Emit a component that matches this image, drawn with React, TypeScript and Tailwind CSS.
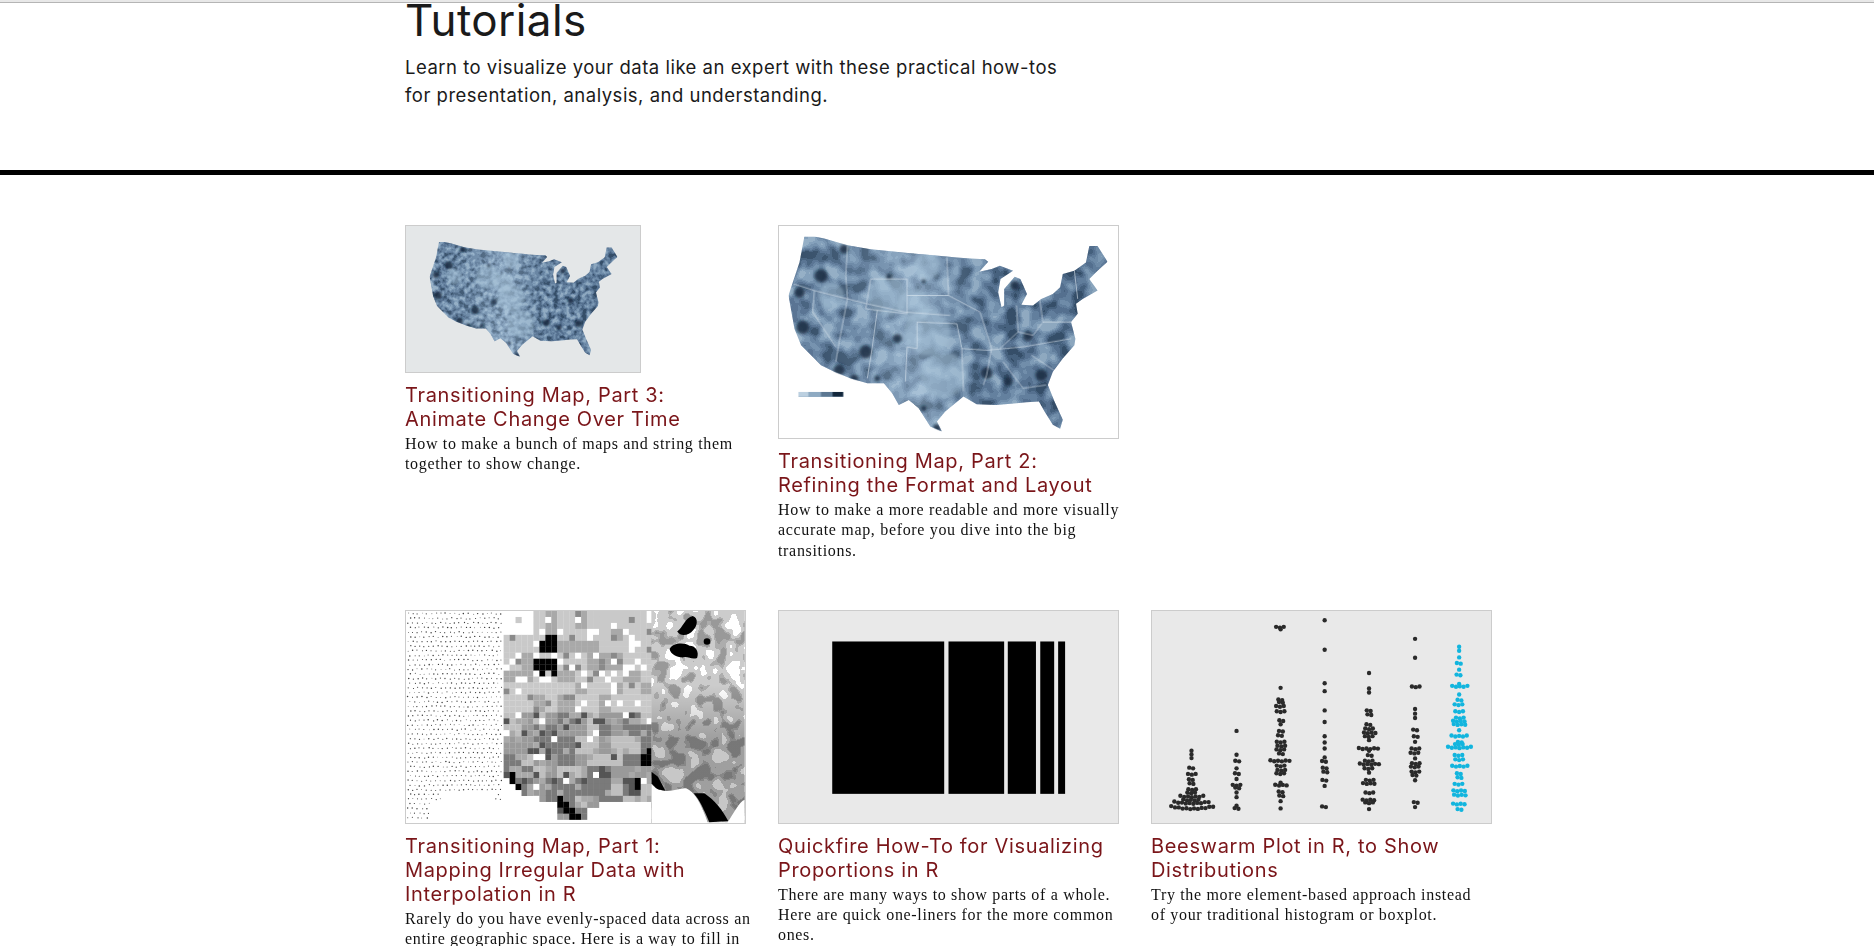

import React from "react";

const outline =
  "100,62 130,62 160,68 230,88 300,100 420,112 530,122 560,125 600,128 645,130 655,138 628,168 665,160 690,150 730,165 692,190 685,230 695,275 703,270 703,220 735,183 752,190 772,235 755,268 790,270 815,250 850,235 872,215 880,175 915,165 950,140 960,90 985,90 1015,138 985,165 960,190 985,225 940,250 920,265 925,295 905,320 918,370 915,390 880,430 850,470 835,510 855,560 880,615 872,642 850,630 825,590 808,560 770,562 740,565 680,570 620,568 580,545 525,590 500,620 515,650 480,635 445,580 415,555 385,570 365,535 340,505 290,505 240,490 190,470 150,450 90,390 70,340 52,240 65,200 85,140";

const stateLines = [
  "68,205 130,225 230,250 290,265 405,290 540,300",
  "230,90 225,180 230,250 205,380 195,440",
  "300,190 285,280 410,295 410,190 300,190",
  "130,225 125,290 195,395",
  "320,285 305,395 290,490",
  "410,395 440,400 440,320 560,325 575,400 650,405 760,395 905,370",
  "410,395 405,500",
  "530,125 535,240 630,290 665,400 650,480 640,510",
  "410,240 535,240",
  "740,270 745,350 690,400",
  "810,250 820,320 790,360 745,350",
  "700,440 760,520 830,510",
  "785,420 860,470",
  "915,165 925,250",
  "820,320 905,320",
  "575,400 580,530",
];

function UsMap({ id, seed, freq, light }: { id: string; seed: number; freq: number; light: boolean }) {
  const darks: [number, number, number][] = [
    [285, 410, 20], [205, 465, 17], [460, 197, 7], [355, 183, 9], [775, 362, 15], [650, 475, 18], [715, 500, 14],
    [500, 640, 12], [85, 230, 16], [95, 335, 20], [380, 370, 14], [150, 180, 20], [735, 210, 14], [250, 490, 12],
    [320, 490, 9], [220, 100, 14], [460, 580, 8], [815, 480, 18],
  ];
  const lights: [number, number, number][] = [
    [470, 350, 70], [350, 240, 60], [470, 150, 40], [520, 480, 70], [430, 270, 50], [180, 240, 40],
  ];
  return (
    <g clipPath={`url(#${id}-clip)`}>
      <defs>
        <clipPath id={`${id}-clip`}>
          <polygon points={outline} />
        </clipPath>
        <filter id={`${id}-n`} x="0" y="0" width="100%" height="100%" colorInterpolationFilters="sRGB">
          <feTurbulence type="fractalNoise" baseFrequency={freq} numOctaves={2} seed={seed} />
          <feColorMatrix type="matrix" values="2 0 0 0 -0.5 2 0 0 0 -0.5 2 0 0 0 -0.5 0 0 0 0 1" />
          <feComponentTransfer>
            <feFuncR type="discrete" tableValues=".66 .58 .51 .44 .38 .3 .22" />
            <feFuncG type="discrete" tableValues=".76 .69 .62 .55 .48 .4 .31" />
            <feFuncB type="discrete" tableValues=".84 .79 .73 .67 .6 .51 .41" />
          </feComponentTransfer>
        </filter>
        <filter id={`${id}-b`} x="-50%" y="-50%" width="200%" height="200%">
          <feGaussianBlur stdDeviation="5" />
        </filter>
        <linearGradient id={`${id}-g`} x1="0" x2="1" y1="0" y2="0">
          <stop offset="0" stopColor="#2a4a6a" stopOpacity="0.12" />
          <stop offset="0.42" stopColor="#a9c3d9" stopOpacity="0.45" />
          <stop offset="0.65" stopColor="#2a4a6a" stopOpacity="0.18" />
          <stop offset="1" stopColor="#2a4a6a" stopOpacity="0.25" />
        </linearGradient>
      </defs>
      <rect x="25" y="30" width="1020" height="640" fill="#7f9fbc" filter={`url(#${id}-n)`} />
      <rect x="25" y="30" width="1020" height="640" fill={`url(#${id}-g)`} />
      <g filter={`url(#${id}-b)`}>
        {lights.map(([x, y, r], i) => (
          <circle key={i} cx={x} cy={y} r={r} fill="#a3bfd6" opacity={0.5} />
        ))}
        {darks.map(([x, y, r], i) => (
          <circle key={i} cx={x} cy={y} r={r} fill="#14293f" opacity={0.85} />
        ))}
      </g>
      {light &&
        stateLines.map((p, i) => <polyline key={i} points={p} fill="none" stroke="#e4edf4" strokeWidth="2" opacity="0.85" />)}
    </g>
  );
}

function rand(seed: number) {
  let s = seed;
  return () => {
    s = (s * 16807) % 2147483647;
    return s / 2147483647;
  };
}

function MapSmall() {
  return (
    <svg viewBox="0 0 234 146" className="block w-full h-full">
      <g transform="translate(13.5 4) scale(0.195)">
        <UsMap id="m1" seed={11} freq={0.035} light={false} />
      </g>
    </svg>
  );
}

function MapLarge() {
  return (
    <svg viewBox="25 30 1020 640" className="block w-full h-full">
      <UsMap id="m2" seed={5} freq={0.02} light={true} />
      <rect x="82" y="531" width="135" height="14" fill="#8eaac2" />
      <rect x="82" y="531" width="30" height="14" fill="#bcd0e0" />
      <rect x="150" y="531" width="35" height="14" fill="#5b7791" />
      <rect x="185" y="531" width="32" height="14" fill="#12263a" />
    </svg>
  );
}

function Interp() {
  const r = rand(4711);
  const cells: React.ReactNode[] = [];
  const boundary = (x: number) => {
    if (x < 400) return 540 + ((x - 322) / 78) * 60;
    if (x < 470) return 610;
    if (x < 560) return 668;
    if (x < 600) return 630;
    return 610;
  };
  const coarse: number[][] = [];
  for (let i = 0; i < 12; i++) {
    coarse.push([]);
    for (let j = 0; j < 16; j++) coarse[i].push(r());
  }
  const blacks = new Set([
    "450,120", "468,120", "432,138", "450,138", "468,138", "414,192", "432,192", "450,192", "468,192", "432,210", "468,210",
    "342,534", "342,552", "360,570", "486,606", "504,624", "522,642", "522,660", "540,660", "756,462", "756,480", "738,480", "720,552", "630,458",
  ]);
  for (let x = 324; x < 762; x += 18) {
    for (let y = 30; y < 670; y += 18) {
      if (y + 9 > boundary(x)) continue;
      const key = `${x},${Math.floor((y - 30) / 18) * 18 + 30}`;
      const snapped = `${Math.round(x / 18) * 18},${Math.round(y / 18) * 18 + 12}`;
      if (x < 400 && y < 100 && r() < 0.8) continue;
      const t = (y - 30) / 640;
      const c = coarse[Math.floor((x - 324) / 40)][Math.floor((y - 30) / 42)];
      const v = r();
      let fill = "#c9c9c9";
      if (t < 0.47) {
        if (c > 0.72) fill = "#a9a9a9";
        if (v < 0.13) fill = "#ffffff";
        else if (v > 0.93) fill = "#8a8a8a";
      } else {
        fill = c < 0.25 ? "#c0c0c0" : c < 0.6 ? "#9a9a9a" : "#7a7a7a";
        if (v < 0.05) fill = "#ffffff";
        else if (v > 0.9) fill = "#555555";
        else if (v > 0.75) fill = "#a9a9a9";
      }
      if (blacks.has(snapped) || blacks.has(key)) fill = "#000000";
      cells.push(<rect key={`${x}-${y}`} x={x} y={y} width="18.5" height="18.5" fill={fill} />);
    }
  }
  const dots: React.ReactNode[] = [];
  for (let y = 38, row = 0; y < 665; y += 14, row++) {
    for (let x = 36 + (row % 2) * 6; x < 318; x += 14) {
      if (y > 610 && x > 105) continue;
      if (y > 575 && x > 135 && x < 300) continue;
      dots.push(<circle key={`${x}-${y}`} cx={x + (r() - 0.5) * 4} cy={y + (r() - 0.5) * 4} r={1.3 + r() * 1} fill="#3a3a3a" />);
    }
  }
  return (
    <svg viewBox="30 30 1022 640" className="block w-full h-full">
      <defs>
        <filter id="gn" x="0" y="0" width="100%" height="100%" colorInterpolationFilters="sRGB">
          <feTurbulence type="fractalNoise" baseFrequency="0.022" numOctaves={2} seed={9} />
          <feColorMatrix type="matrix" values="3 0 0 0 -1 3 0 0 0 -1 3 0 0 0 -1 0 0 0 0 1" />
          <feComponentTransfer>
            <feFuncR type="discrete" tableValues="1 .8 .8 .8 .68 .6" />
            <feFuncG type="discrete" tableValues="1 .8 .8 .8 .68 .6" />
            <feFuncB type="discrete" tableValues="1 .8 .8 .8 .68 .6" />
          </feComponentTransfer>
        </filter>
        <linearGradient id="gd" x1="0" x2="0" y1="0" y2="1">
          <stop offset="0.35" stopColor="#000" stopOpacity="0" />
          <stop offset="0.6" stopColor="#000" stopOpacity="0.22" />
        </linearGradient>
        <clipPath id="rp">
          <rect x="770" y="30" width="282" height="640" />
        </clipPath>
      </defs>
      <rect x="30" y="30" width="1022" height="640" fill="#fff" />
      {dots}
      {cells}
      <g clipPath="url(#rp)">
        <rect x="770" y="30" width="282" height="640" fill="#ccc" filter="url(#gn)" />
        <rect x="770" y="30" width="282" height="640" fill="url(#gd)" />
        <path d="M848 92 C865 80 872 50 895 45 C912 50 910 75 896 88 C885 102 860 110 848 92 Z M825 145 C835 125 870 125 885 135 C905 135 915 155 908 172 C890 178 880 165 865 170 C845 170 828 160 825 145 Z" fill="#000" />
        <circle cx="938" cy="122" r="10" fill="#000" />
        <path d="M770 515 L790 530 L815 578 L790 572 L770 550 Z" fill="#000" />
        <path d="M770 552 C800 590 850 565 875 565 C900 575 920 610 940 668 L1000 668 C1020 640 1035 605 1052 600 L1052 670 L770 670 Z" fill="#fff" />
        <path d="M898 580 L930 580 C960 600 985 630 1002 664 L945 668 C930 630 915 600 898 580 Z" fill="#000" />
      </g>
    </svg>
  );
}

function Bars() {
  const bars = [
    [184, 522],
    [535, 703],
    [714, 799],
    [812, 854],
    [866, 887],
  ];
  return (
    <svg viewBox="25 30 1020 640" className="block w-full h-full">
      {bars.map(([a, b], i) => (
        <rect key={i} x={a} y="122" width={b - a} height="460" fill="#000" />
      ))}
    </svg>
  );
}

const swarm: { x: number; color: string; rows: [number, number][] }[] = [
  { x: 152, color: "#2a2a2a", rows: [[452,1],[463,1],[474,1],[503,2],[522,3],[538,2],[550,2],[568,3],[578,3],[590,7],[600,5],[610,10],[626,12]] },
  { x: 288, color: "#2a2a2a", rows: [[392,1],[464,1],[482,2],[505,1],[520,2],[537,1],[555,3],[563,2],[578,1],[592,1],[618,1],[625,2]] },
  { x: 421, color: "#2a2a2a", rows: [[78,3],[85,1],[262,1],[297,2],[305,2],[317,3],[333,3],[360,2],[372,1],[392,2],[405,2],[425,3],[437,3],[448,3],[460,2],[482,6],[497,3],[510,3],[520,3],[555,4],[548,1],[575,2],[587,2],[604,1],[626,1]] },
  { x: 554, color: "#2a2a2a", rows: [[58,1],[147,1],[248,1],[272,1],[330,1],[365,1],[408,1],[427,1],[445,1],[472,1],[483,2],[503,2],[515,2],[540,2],[558,1],[620,2]] },
  { x: 688, color: "#2a2a2a", rows: [[217,1],[264,1],[276,1],[330,2],[342,2],[372,2],[385,3],[397,4],[408,3],[420,1],[445,6],[452,1],[465,2],[482,3],[492,6],[505,3],[518,1],[540,3],[550,4],[578,3],[600,4],[608,3],[628,1]] },
  { x: 827, color: "#2a2a2a", rows: [[114,1],[171,1],[258,3],[326,1],[340,1],[353,1],[388,2],[408,2],[425,1],[445,3],[458,3],[475,1],[490,3],[500,3],[515,3],[525,2],[541,1],[607,2],[622,1]] },
  { x: 960, color: "#12b5de", rows: [[138,1],[150,1],[170,1],[187,2],[207,1],[222,2],[250,1],[257,5],[282,1],[298,2],[312,3],[333,3],[352,3],[362,4],[372,4],[390,1],[407,5],[425,2],[432,3],[442,7],[465,3],[478,3],[498,5],[520,2],[532,2],[552,3],[572,4],[585,4],[612,4],[628,2]] },
];

function Beeswarm() {
  return (
    <svg viewBox="34 30 1021 640" className="block w-full h-full">
      {swarm.map((c) =>
        c.rows.map(([y, n], i) =>
          Array.from({ length: n }).map((_, k) => {
            const d = k - (n - 1) / 2;
            const sway = ((i * 7) % 5) - 2;
            return (
              <circle
                key={`${c.x}-${i}-${k}`}
                cx={c.x + d * 11.5 + (n === 1 ? 0 : sway)}
                cy={y - Math.min(d * d * 0.25, 7) + (k % 2) * 2}
                r="6.6"
                fill={c.color}
              />
            );
          })
        )
      )}
    </svg>
  );
}

function Card({ image, title, desc, small, bg }: { image: React.ReactNode; title: string[]; desc: string[]; small?: boolean; bg: string }) {
  return (
    <div className="w-[341px] min-w-0">
      <div className={`${small ? "w-[236px] h-[148px]" : "w-[341px] h-[214px]"} ${bg} border border-[#cccccc] overflow-hidden`}>{image}</div>
      <h3 className="mt-[10px] text-[20px] leading-[24px] font-normal tracking-[0.66px] text-[#7a1519] font-['Inter','Liberation_Sans',sans-serif]">
        {title.map((t) => (
          <div key={t} className="whitespace-nowrap">{t}</div>
        ))}
      </h3>
      <div className="mt-[3px] text-[16px] leading-[20.3px] tracking-[0.67px] text-[#111111] font-['Liberation_Serif',serif]">
        {desc.map((t) => (
          <div key={t} className="whitespace-nowrap">{t}</div>
        ))}
      </div>
    </div>
  );
}

export default function App() {
  return (
    <div className="h-[946px] overflow-hidden bg-white relative">
      <div className="absolute top-0 left-0 right-0 h-[3px] bg-[#e8e8e8] border-b border-[#b5b5b5] z-10" />
      <header className="pl-[405px] h-[170px]">
        <h1 className="text-[44px] leading-[40px] tracking-[0.4px] font-normal text-[#1a1a1a] font-['Inter','Liberation_Sans',sans-serif]">Tutorials</h1>
        <p className="mt-[14px] text-[18.5px] leading-[27.5px] tracking-[0.5px] text-[#1a1a1a] font-['Inter','Liberation_Sans',sans-serif]">
          Learn to visualize your data like an expert with these practical how-tos
          <br />
          for presentation, analysis, and understanding.
        </p>
      </header>
      <div className="h-[5px] bg-black" />
      <main className="pl-[405px] pt-[50px]">
        <div className="flex gap-[32px]">
          <Card
            small
            bg="bg-[#e4e7e8]"
            image={<MapSmall />}
            title={["Transitioning Map, Part 3:", "Animate Change Over Time"]}
            desc={["How to make a bunch of maps and string them", "together to show change."]}
          />
          <Card
            bg="bg-white"
            image={<MapLarge />}
            title={["Transitioning Map, Part 2:", "Refining the Format and Layout"]}
            desc={["How to make a more readable and more visually", "accurate map, before you dive into the big", "transitions."]}
          />
        </div>
        <div className="flex gap-[32px] mt-[49px]">
          <Card
            bg="bg-white"
            image={<Interp />}
            title={["Transitioning Map, Part 1:", "Mapping Irregular Data with", "Interpolation in R"]}
            desc={["Rarely do you have evenly-spaced data across an", "entire geographic space. Here is a way to fill in", "the gaps."]}
          />
          <Card
            bg="bg-[#e9e9e9]"
            image={<Bars />}
            title={["Quickfire How-To for Visualizing", "Proportions in R"]}
            desc={["There are many ways to show parts of a whole.", "Here are quick one-liners for the more common", "ones."]}
          />
          <Card
            bg="bg-[#e9e9e9]"
            image={<Beeswarm />}
            title={["Beeswarm Plot in R, to Show", "Distributions"]}
            desc={["Try the more element-based approach instead", "of your traditional histogram or boxplot."]}
          />
        </div>
      </main>
    </div>
  );
}
